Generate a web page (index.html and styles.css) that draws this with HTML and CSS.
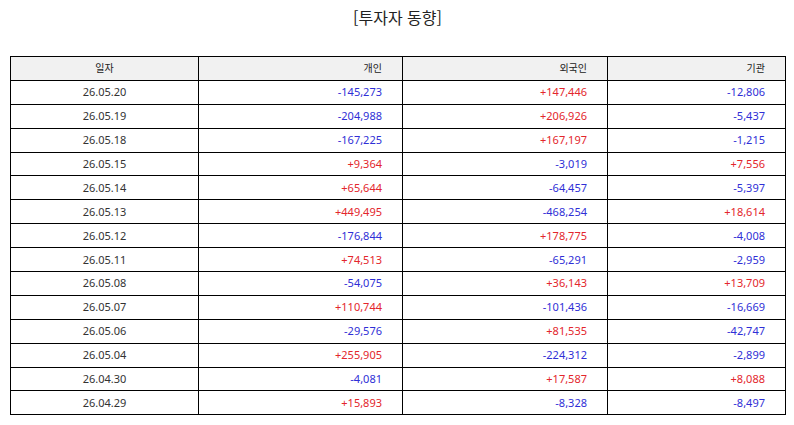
FILE: index.html
```html
<!DOCTYPE html>
<html lang="ko">
<head>
<meta charset="utf-8">
<link rel="stylesheet" href="styles.css">
</head>
<body>
<div class="page">
  <h1 class="title">[투자자 동향]</h1>
  <table class="flow">
    <colgroup>
      <col class="c-date"><col class="c-ind"><col class="c-for"><col class="c-inst">
    </colgroup>
    <thead>
      <tr><th class="center">일자</th><th>개인</th><th>외국인</th><th>기관</th></tr>
    </thead>
    <tbody>
      <tr><td class="center">26.05.20</td><td class="dn">-145,273</td><td class="up">+147,446</td><td class="dn">-12,806</td></tr>
      <tr><td class="center">26.05.19</td><td class="dn">-204,988</td><td class="up">+206,926</td><td class="dn">-5,437</td></tr>
      <tr><td class="center">26.05.18</td><td class="dn">-167,225</td><td class="up">+167,197</td><td class="dn">-1,215</td></tr>
      <tr><td class="center">26.05.15</td><td class="up">+9,364</td><td class="dn">-3,019</td><td class="up">+7,556</td></tr>
      <tr><td class="center">26.05.14</td><td class="up">+65,644</td><td class="dn">-64,457</td><td class="dn">-5,397</td></tr>
      <tr><td class="center">26.05.13</td><td class="up">+449,495</td><td class="dn">-468,254</td><td class="up">+18,614</td></tr>
      <tr><td class="center">26.05.12</td><td class="dn">-176,844</td><td class="up">+178,775</td><td class="dn">-4,008</td></tr>
      <tr><td class="center">26.05.11</td><td class="up">+74,513</td><td class="dn">-65,291</td><td class="dn">-2,959</td></tr>
      <tr><td class="center">26.05.08</td><td class="dn">-54,075</td><td class="up">+36,143</td><td class="up">+13,709</td></tr>
      <tr><td class="center">26.05.07</td><td class="up">+110,744</td><td class="dn">-101,436</td><td class="dn">-16,669</td></tr>
      <tr><td class="center">26.05.06</td><td class="dn">-29,576</td><td class="up">+81,535</td><td class="dn">-42,747</td></tr>
      <tr><td class="center">26.05.04</td><td class="up">+255,905</td><td class="dn">-224,312</td><td class="dn">-2,899</td></tr>
      <tr><td class="center">26.04.30</td><td class="dn">-4,081</td><td class="up">+17,587</td><td class="up">+8,088</td></tr>
      <tr><td class="center">26.04.29</td><td class="up">+15,893</td><td class="dn">-8,328</td><td class="dn">-8,497</td></tr>
    </tbody>
  </table>
</div>
</body>
</html>
```

FILE: styles.css
```css
html, body {
  margin: 0;
  padding: 0;
  background: #ffffff;
}

body {
  font-family: "Noto Sans", "Noto Sans CJK KR", sans-serif;
  color: #222222;
}

.page {
  width: 794px;
  height: 425px;
  padding: 0 9px 0 10px;
  box-sizing: border-box;
}

.title {
  margin: 0;
  padding-top: 5px;
  height: 56px;
  box-sizing: border-box;
  text-align: center;
  font-family: "Noto Sans CJK KR", sans-serif;
  font-size: 16px;
  font-weight: 400;
  line-height: 24px;
  color: #222222;
}

.flow {
  width: 775px;
  border-collapse: collapse;
  table-layout: fixed;
  font-size: 11px;
}

.c-date { width: 188px; }
.c-ind { width: 204px; }
.c-for { width: 205px; }
.c-inst { width: 178px; }

.flow th,
.flow td {
  border: 1.5px solid #000000;
  height: 23.9px;
  padding: 0 20px 0 6px;
  box-sizing: border-box;
  text-align: right;
  font-weight: 400;
  line-height: 14px;
  white-space: nowrap;
}

.flow th {
  background: #f1f1f1;
  font-family: "Noto Sans CJK KR", sans-serif;
  font-size: 10px;
  color: #222222;
}

.flow td.center,
.flow th.center {
  text-align: center;
  padding: 0;
}

.flow td.center {
  color: #333333;
}

.up { color: #e3262c; }
.dn { color: #2f2fd6; }
```
